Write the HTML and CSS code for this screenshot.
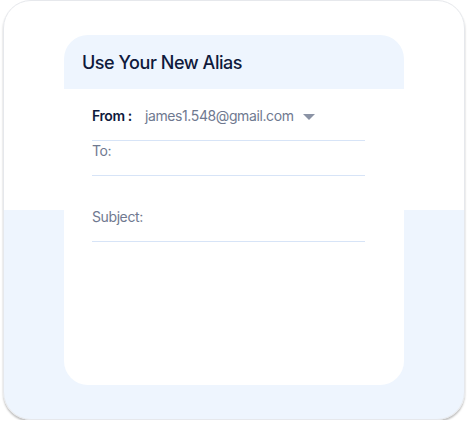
FILE: index.html
```html
<!DOCTYPE html>
<html>
<head>
<meta charset="utf-8">
<link rel="stylesheet" href="styles.css">
</head>
<body>
<div class="frame">
  <div class="card">
    <div class="card-head">
      <h1 class="title">Use Your New Alias</h1>
    </div>
    <div class="card-body">
      <div class="field from">
        <span class="label">From :</span>
        <span class="email">james1.548@gmail.com</span>
        <svg class="caret" width="12" height="6" viewBox="0 0 12 6"><path d="M0 0H12L6 6Z" fill="#8b93a5"/></svg>
      </div>
      <div class="field to">
        <span class="muted">To:</span>
      </div>
      <div class="field subject">
        <span class="muted">Subject:</span>
      </div>
    </div>
  </div>
</div>
</body>
</html>
```

FILE: styles.css
```css
html, body {
  margin: 0;
  padding: 0;
  background: #ffffff;
}
body {
  font-family: Inter, "Noto Sans", sans-serif;
}
.frame {
  box-sizing: border-box;
  margin-left: 3px;
  width: 462px;
  height: 420px;
  border: 1px solid #e6e8ec;
  border-radius: 28px;
  background: linear-gradient(#ffffff 209px, #eef5fe 209px);
  box-shadow: 0 2px 2px rgba(0, 0, 0, 0.25);
  padding-top: 34px;
  padding-left: 60px;
}
.card {
  width: 340px;
  height: 350px;
  border-radius: 24px;
  background: #ffffff;
  overflow: hidden;
}
.card-head {
  height: 54px;
  background: #eef5fe;
  display: flex;
  align-items: center;
  padding-left: 18px;
}
.title {
  margin: 0;
  font-size: 18px;
  font-weight: 500;
  color: #0f1a3c;
  letter-spacing: -0.45px;
  padding-top: 1px;
}
.card-body {
  padding-left: 28px;
}
.field {
  width: 273px;
  border-bottom: 1px solid #d7e4f7;
  line-height: 20px;
  font-size: 14px;
  display: flex;
  align-items: center;
  letter-spacing: -0.4px;
}
.from {
  padding-top: 17px;
  padding-bottom: 14px;
}
.to {
  padding-bottom: 14px;
}
.subject {
  padding-top: 31px;
  padding-bottom: 14px;
}
.label {
  font-weight: 600;
  color: #0f1a3c;
  width: 53px;
}
.email {
  color: #6f7990;
}
.caret {
  margin-left: 9px;
  margin-top: 1px;
}
.muted {
  color: #6f7990;
}
```
